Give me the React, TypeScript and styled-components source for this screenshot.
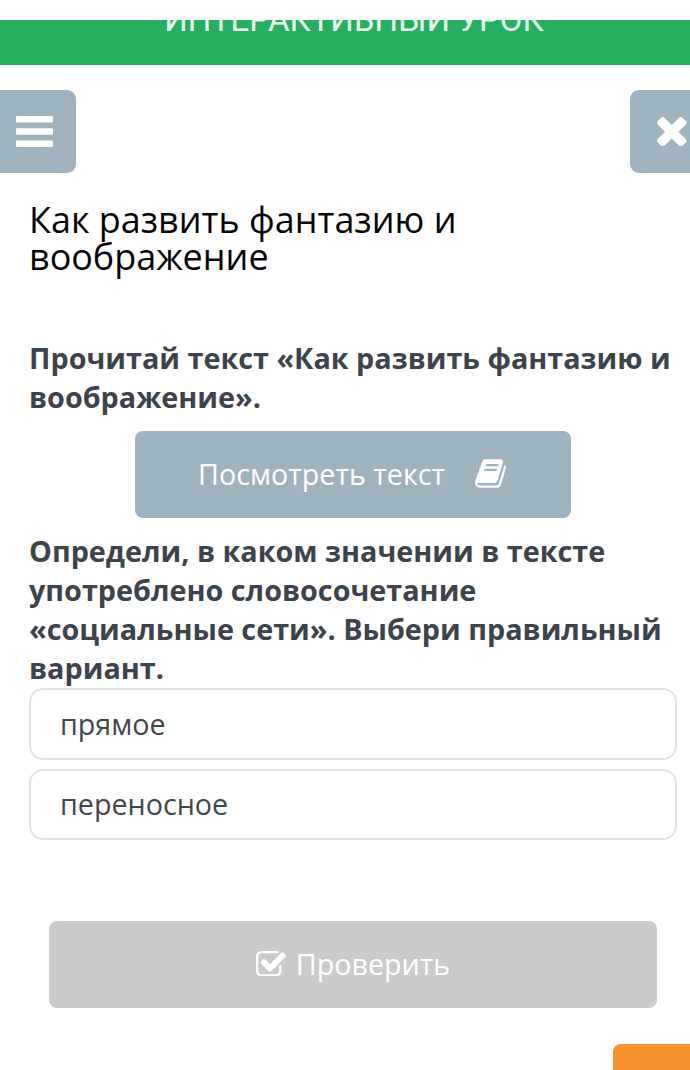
import React from 'react';
import styled, { createGlobalStyle } from 'styled-components';

const Global = createGlobalStyle`
  * { box-sizing: border-box; }
  body { margin: 0; background: #fff; font-family: "Open Sans", "Noto Sans", sans-serif; overflow: hidden; }
`;
const Page = styled.div`
  height: 1070px; width: 690px; overflow: hidden; padding-top: 20px;
  display: flex; flex-direction: column;
`;
const Banner = styled.header`
  height: 45px; flex: none; background: #27ae60; color: #e9fbf0; overflow: hidden;
  display: flex; justify-content: center; align-items: flex-start;
  font: 400 33px/36px Roboto, sans-serif; padding-left: 18px;
`;
const BannerText = styled.span`margin-top: -18px; white-space: nowrap;`;
const Toolbar = styled.nav`display: flex; justify-content: space-between; margin-top: 25px; height: 83px; flex: none;`;
const ToolButton = styled.button<{ $side: 'left' | 'right' }>`
  border: 0; background: #9fb3bf; color: #fff; padding: 0; display: flex; align-items: center;
  width: ${p => (p.$side === 'left' ? 76 : 60)}px;
  padding-left: ${p => (p.$side === 'left' ? 16 : 27)}px;
  border-radius: ${p => (p.$side === 'left' ? '0 9px 9px 0' : '9px 0 0 9px')};
`;
const Icon = styled.svg`display: block; flex: none; fill: currentColor;`;
const Content = styled.main`padding: 28px 13px 0 29px; flex: none; color: #3d434b;`;
const Title = styled.h1`margin: 0; font-size: 35.95px; line-height: 37px; font-weight: 400; color: #050505; white-space: nowrap;`;
const Task = styled.p<{ $top: number }>`
  margin: ${p => p.$top}px 0 0; font-size: 28.78px; line-height: 39px; font-weight: 700; white-space: nowrap;
`;
const ActionButton = styled.button`
  display: flex; align-items: center; justify-content: center; height: 87px; flex: none;
  border: 0; border-radius: 8px; padding: 0 0 2px; color: #fff; font: 400 28.7px "Open Sans", sans-serif;
`;
const TextButton = styled(ActionButton)`
  width: 436px; margin: 15px 0 0 106px; padding-right: 2px; gap: 30px; background: #9fb3bf;
`;
const CheckButton = styled(ActionButton)`
  width: 608px; margin: 81px 0 0 49px; gap: 10px; background: #cbcbcb;
`;
const Options = styled.div`display: flex; flex-direction: column; gap: 9px; margin-top: 1px;`;
const Option = styled.div<{ $height: number }>`
  height: ${p => p.$height}px; border: 2px solid #e0e4e4; border-radius: 14px; padding: 0 0 2px 29px;
  display: flex; align-items: center; font-size: 28.7px; color: #42474b;
`;
const Corner = styled.div`width: 77px; height: 60px; flex: none; margin: 36px 0 0 auto; background: #f5932f; border-radius: 8px 0 0 0;`;

const BarsIcon = () => (
  <Icon width="37" height="31" viewBox="0 0 37 31">
    <rect width="37" height="6.5" rx="1" />
    <rect y="12.3" width="37" height="6.5" rx="1" />
    <rect y="24.5" width="37" height="6.5" rx="1" />
  </Icon>
);
const TimesIcon = () => (
  <Icon width="29.5" height="29.5" viewBox="302 366 1188 1188">
    <path d="M1490 1322q0 40-28 68l-136 136q-28 28-68 28t-68-28l-294-294-294 294q-28 28-68 28t-68-28l-136-136q-28-28-28-68t28-68l294-294-294-294q-28-28-28-68t28-68l136-136q28-28 68-28t68 28l294 294 294-294q28-28 68-28t68 28l136 136q28 28 28 68t-28 68l-294 294 294 294q28 28 28 68z" />
  </Icon>
);
const BookIcon = () => (
  <Icon width="31" height="29" viewBox="62 128 1670 1536">
    <path d="M1703 478q40 57 18 129l-275 906q-19 64-76.5 107.5t-122.5 43.5h-923q-77 0-148.5-53.5t-99.5-131.5q-24-67-2-127 0-4 3-27t4-37q1-8-3-21.5t-3-19.5q2-11 8-21t16.5-23.5 16.5-23.5q23-38 45-91.5t30-91.5q3-10 .5-30t-.5-28q3-11 17-28t17-23q21-36 42-92t25-90q1-9-2.5-32t.5-28q4-13 22-30.5t22-22.5q19-26 42.5-84.5t27.5-96.5q1-8-3-25.5t-2-26.5q2-8 9-18t18-23 17-21q8-12 16.5-30.5t15-35 16-36 19.5-32 26.5-23.5 36-11.5 47.5 5.5l-1 3q38-9 51-9h761q74 0 114 56t18 130l-274 906q-36 119-71.5 153.5t-128.5 34.5h-869q-27 0-38 15-11 16-1 43 24 70 144 70h923q29 0 56-15.5t35-41.5l300-987q7-22 5-57 38 15 59 43zm-1064 2q-4 13 2 22.5t20 9.5h608q13 0 25.5-9.5t16.5-22.5l21-64q4-13-2-22.5t-20-9.5h-608q-13 0-25.5 9.5t-16.5 22.5zm-83 256q-4 13 2 22.5t20 9.5h608q13 0 25.5-9.5t16.5-22.5l21-64q4-13-2-22.5t-20-9.5h-608q-13 0-25.5 9.5t-16.5 22.5z" />
  </Icon>
);
const CheckIcon = () => (
  <Icon width="30" height="25.5" viewBox="64 128 1664 1408">
    <path d="M1472 930v318q0 119-84.5 203.5t-203.5 84.5h-832q-119 0-203.5-84.5t-84.5-203.5v-832q0-119 84.5-203.5t203.5-84.5h832q63 0 117 25 15 7 18 23 3 17-9 29l-49 49q-10 10-23 10-3 0-9-2-23-6-45-6h-832q-66 0-113 47t-47 113v832q0 66 47 113t113 47h832q66 0 113-47t47-113v-254q0-13 9-22l64-64q10-10 23-10 6 0 12 3 20 8 20 29zm231-489l-814 814q-24 24-57 24t-57-24l-430-430q-24-24-24-57t24-57l110-110q24-24 57-24t57 24l263 263 647-647q24-24 57-24t57 24l110 110q24 24 24 57t-24 57z" />
  </Icon>
);

export default function App() {
  return (
    <Page>
      <Global />
      <Banner><BannerText>ИНТЕРАКТИВНЫЙ УРОК</BannerText></Banner>
      <Toolbar>
        <ToolButton $side="left"><BarsIcon /></ToolButton>
        <ToolButton $side="right"><TimesIcon /></ToolButton>
      </Toolbar>
      <Content>
        <Title>Как развить фантазию и<br />воображение</Title>
        <Task $top={63}>Прочитай текст «Как развить фантазию и<br />воображение».</Task>
        <TextButton>Посмотреть текст <BookIcon /></TextButton>
        <Task $top={13}>Определи, в каком значении в тексте<br />употреблено словосочетание<br />«социальные сети». Выбери правильный<br />вариант.</Task>
        <Options>
          <Option $height={72}>прямое</Option>
          <Option $height={71}>переносное</Option>
        </Options>
      </Content>
      <CheckButton><CheckIcon />Проверить</CheckButton>
      <Corner />
    </Page>
  );
}
